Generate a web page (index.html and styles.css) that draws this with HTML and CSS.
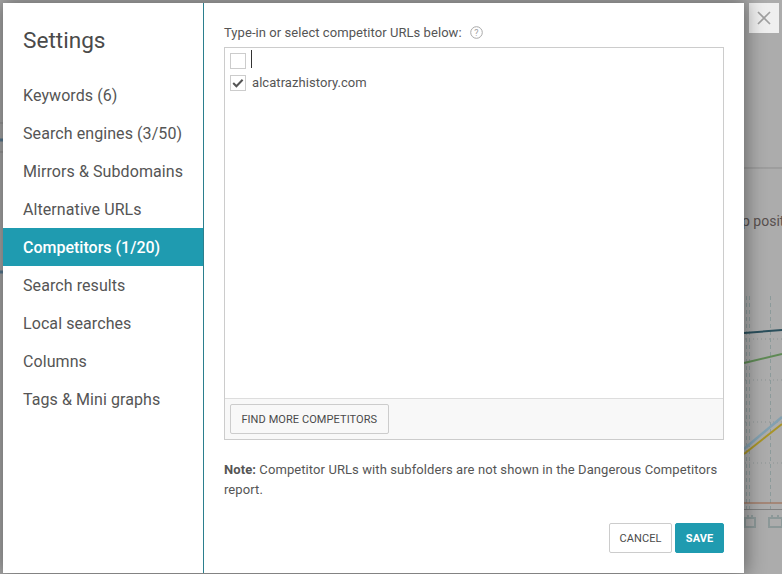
FILE: index.html
```html
<!DOCTYPE html>
<html lang="en">
<head>
<meta charset="utf-8">
<title>Settings</title>
<link rel="stylesheet" href="styles.css">
</head>
<body>
<div class="backdrop">
  <svg class="chart" width="782" height="574" viewBox="0 0 782 574">
    <path d="M744 168H782" stroke="#8f8f8f" fill="none"/>
    <path d="M0 123H3M0 152H3" stroke="#8f8f8f" fill="none"/>
    <path d="M0 140H3M0 272H3" stroke="#5a7d95" stroke-width="3" fill="none"/>
    <path d="M745 339H782M745 380H782M745 422H782M745 463H782" stroke="#8c9494" stroke-dasharray="1 3" fill="none"/>
    <path d="M746.5 296V510M749.5 296V510M770.5 296V510" stroke="#8c9a9a" stroke-dasharray="4 3" fill="none"/>
    <path d="M744 333L782 330" stroke="#2a4f5c" stroke-width="2" fill="none"/>
    <path d="M744 363L782 354" stroke="#5f8a55" stroke-width="2" fill="none"/>
    <path d="M744 449L782 417" stroke="#82a0b0" stroke-width="2.5" fill="none"/>
    <path d="M744 454L782 424" stroke="#a89428" stroke-width="2" fill="none"/>
    <path d="M744 503H782" stroke="#9c6244" fill="none"/>
    <path d="M744 509.5H782" stroke="#808080" fill="none"/>
    <path d="M745 518H755V527H745ZM769 518H782V527H769Z" stroke="#8c9898" stroke-width="2" fill="none"/>
    <path d="M748 515V518M752 515V518M772 515V518M778 515V518" stroke="#8c9898" stroke-width="2" fill="none"/>
  </svg>
  <span class="peek">p posit</span>
  <button class="close" aria-label="Close">
    <svg width="14" height="14" viewBox="0 0 14 14"><path d="M1 1L13 13M13 1L1 13" stroke="#a0a0a0" stroke-width="1.7" fill="none"/></svg>
  </button>
  <div class="dialog">
    <aside class="side">
      <h1 class="title">Settings</h1>
      <nav class="menu">
        <a class="item">Keywords (6)</a>
        <a class="item">Search engines (3/50)</a>
        <a class="item">Mirrors &amp; Subdomains</a>
        <a class="item">Alternative URLs</a>
        <a class="item active">Competitors (1/20)</a>
        <a class="item">Search results</a>
        <a class="item">Local searches</a>
        <a class="item">Columns</a>
        <a class="item">Tags &amp; Mini graphs</a>
      </nav>
    </aside>
    <main class="content">
      <div class="label">
        <span>Type-in or select competitor URLs below:</span>
        <svg class="help" width="13" height="13" viewBox="0 0 13 13"><circle cx="6.5" cy="6.5" r="5.8" stroke="#a8a8a8" fill="none"/><text x="6.5" y="9.6" text-anchor="middle" class="help-q">?</text></svg>
      </div>
      <div class="box">
        <div class="list">
          <div class="row">
            <span class="check"></span>
            <span class="caret"></span>
          </div>
          <div class="row">
            <span class="check">
              <svg width="14" height="14" viewBox="0 0 14 14"><path d="M2.2 7L5.4 10.2L11.6 3.8" stroke="#555" stroke-width="2" fill="none"/></svg>
            </span>
            <span class="url">alcatrazhistory.com</span>
          </div>
        </div>
        <div class="tools">
          <button class="btn">FIND MORE COMPETITORS</button>
        </div>
      </div>
      <p class="note"><b>Note:</b> Competitor URLs with subfolders are not shown in the Dangerous Competitors report.</p>
      <div class="actions">
        <button class="btn cancel">CANCEL</button>
        <button class="btn save">SAVE</button>
      </div>
    </main>
  </div>
</div>
</body>
</html>
```
FILE: styles.css
```css
* { box-sizing: border-box; }
html, body { margin: 0; height: 100%; overflow: hidden; }
body { font-family: Roboto, "Liberation Sans", sans-serif; color: #4a4a4a; }
.backdrop { position: relative; width: 782px; height: 574px; background: #acacac; overflow: hidden; }
.chart { position: absolute; left: 0; top: 0; }
.peek { position: absolute; left: 742px; top: 213px; font-size: 14px; color: #58504f; white-space: nowrap; }
.close { position: absolute; left: 749px; top: 3px; width: 30px; height: 30px; padding: 0; border: 0; background: #efefef; display: flex; align-items: center; justify-content: center; }
.dialog { position: absolute; left: 3px; top: 3px; width: 741px; height: 570px; background: #fff; display: flex; box-shadow: 0 0 18px 2px rgba(0,0,0,.42); }
.side { width: 201px; flex: none; border-right: 1px solid #2b7f8e; }
.title { margin: 0; padding: 22px 0 0 20px; height: 73px; font-size: 22.6px; font-weight: 400; line-height: 32px; color: #4a4a4a; }
.menu { display: flex; flex-direction: column; }
.item { height: 38px; padding: 1px 0 0 20px; font-size: 16px; letter-spacing: .08px; line-height: 37px; color: #555; white-space: nowrap; }
.item.active { background: #1f9bb0; color: #fff; font-weight: 500; letter-spacing: 0; }
.content { flex: 1; display: flex; flex-direction: column; padding: 20px; }
.label { display: flex; align-items: center; gap: 8px; height: 18px; font-size: 13px; letter-spacing: .06px; color: #555; }
.help-q { font-family: Roboto, sans-serif; font-size: 9px; fill: #a0a0a0; }
.box { margin-top: 6px; height: 393px; border: 1px solid #ccc; display: flex; flex-direction: column; }
.list { flex: 1; padding: 2px 5px; }
.row { display: flex; align-items: center; gap: 5px; height: 22px; }
.check { width: 16px; height: 16px; border: 1px solid #ccc; display: flex; align-items: center; justify-content: center; flex: none; }
.check svg { flex: none; }
.caret { width: 1px; height: 18px; margin-top: -4px; background: #333; }
.url { margin: -2px 0 0 1px; font-size: 13px; letter-spacing: .06px; color: #555; }
.tools { height: 41px; padding: 5px; background: #f8f8f8; border-top: 1px solid #ddd; }
.btn { font-family: Roboto, "Liberation Sans", sans-serif; height: 30px; padding: 0 10.4px; background: #fff; border: 1px solid #ccc; border-radius: 2px; font-size: 11px; letter-spacing: .08px; color: #4a4a4a; white-space: nowrap; }
.tools .btn { background: #f8f8f8; }
.note { margin: 20px 0 0; font-size: 13px; letter-spacing: .09px; line-height: 20px; color: #555; }
.note b { font-weight: 700; }
.actions { margin-top: auto; display: flex; justify-content: flex-end; gap: 3px; }
.cancel { width: 63px; padding: 0; }
.save { width: 49px; padding: 0; background: #1f9bb0; border-color: #1f9bb0; color: #fff; font-weight: 700; }
```
